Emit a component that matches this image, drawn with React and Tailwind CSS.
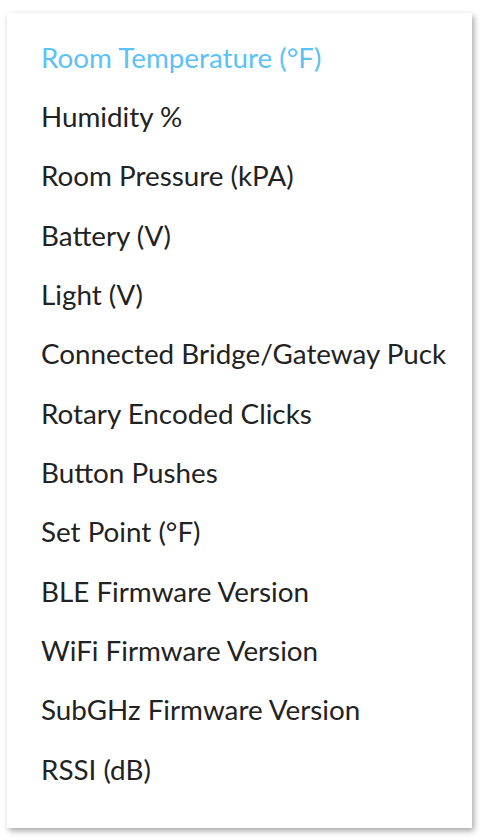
const items = [
  'Room Temperature (°F)',
  'Humidity %',
  'Room Pressure (kPA)',
  'Battery (V)',
  'Light (V)',
  'Connected Bridge/Gateway Puck',
  'Rotary Encoded Clicks',
  'Button Pushes',
  'Set Point (°F)',
  'BLE Firmware Version',
  'WiFi Firmware Version',
  'SubGHz Firmware Version',
  'RSSI (dB)',
];

export default function App() {
  return (
    <div className="min-h-screen w-[488px] h-[840px] bg-white font-['Lato',sans-serif] pt-[13px] pl-[7px]">
      <div className="w-[465px] h-[815px] bg-white shadow-[2px_3px_6px_rgba(0,0,0,0.35)] pt-[15px] pb-[28px]">
        <ul>
          {items.map((label, i) => (
            <li
              key={label}
              className={`h-[59.33px] flex items-center pl-[34px] text-[27.8px] ${
                i === 0 ? 'text-[#5cc1f7]' : 'text-[#222222]'
              }`}
            >
              {label}
            </li>
          ))}
        </ul>
      </div>
    </div>
  );
}
